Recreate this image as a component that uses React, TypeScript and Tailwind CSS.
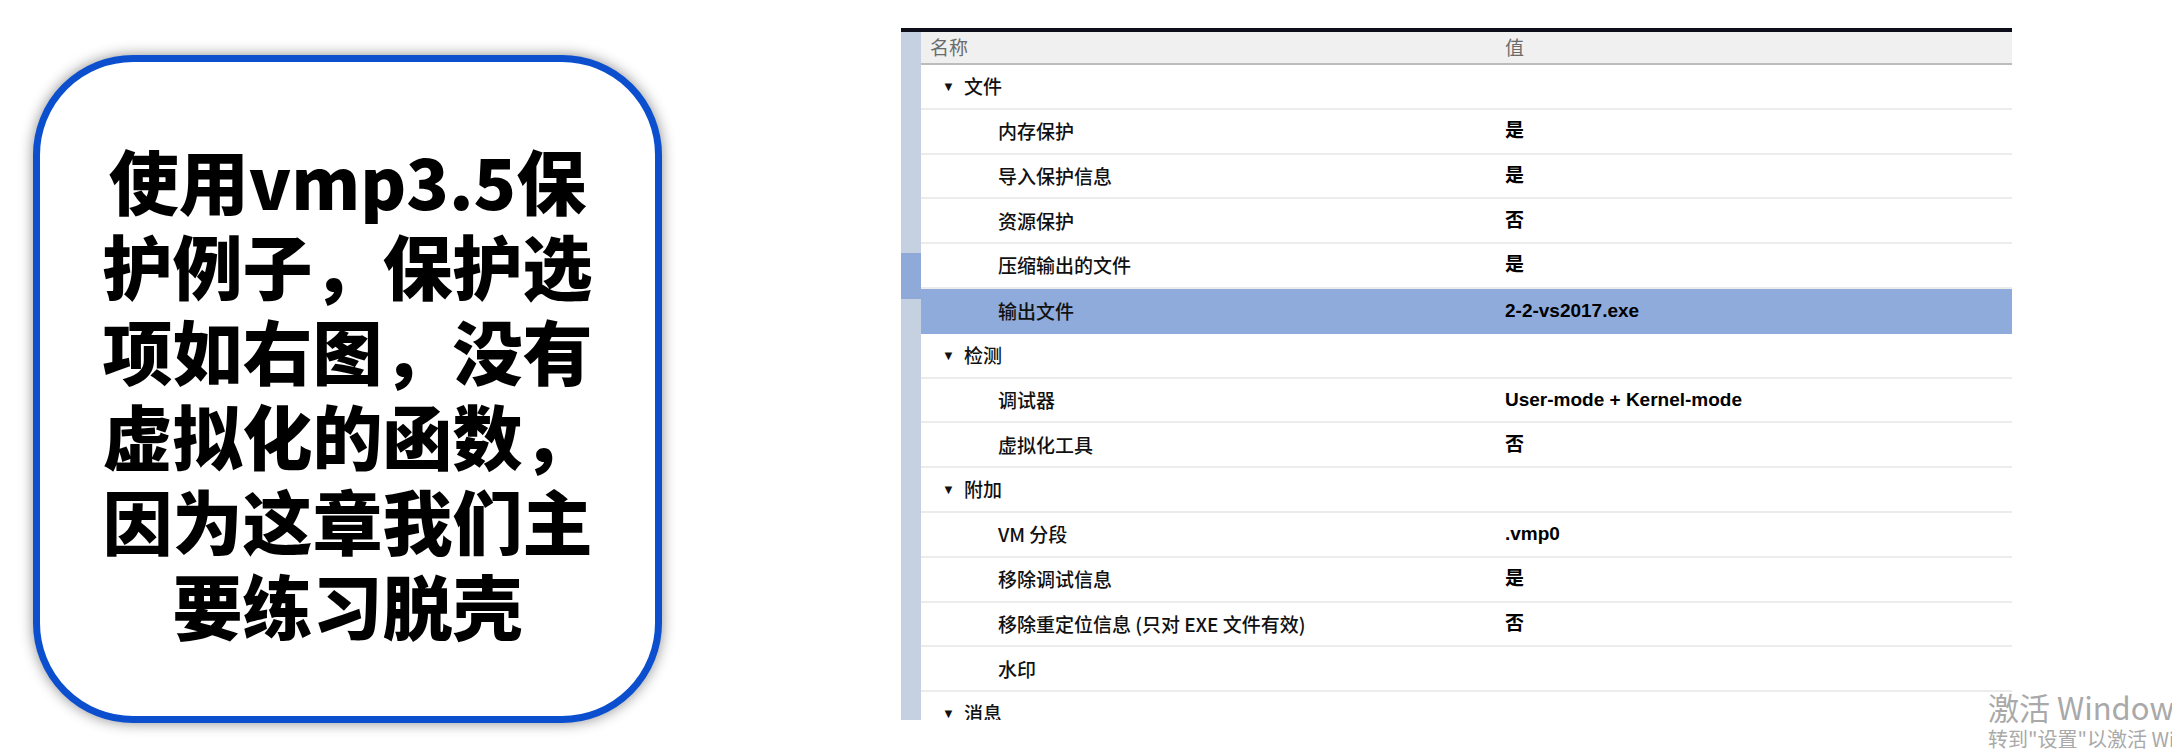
type Row = { name: string; value?: string; selected?: boolean };
type Group = { title: string; rows: Row[] };

const GROUPS: Group[] = [
  {
    title: "文件",
    rows: [
      { name: "内存保护", value: "是" },
      { name: "导入保护信息", value: "是" },
      { name: "资源保护", value: "否" },
      { name: "压缩输出的文件", value: "是" },
      { name: "输出文件", value: "2-2-vs2017.exe", selected: true },
    ],
  },
  {
    title: "检测",
    rows: [
      { name: "调试器", value: "User-mode + Kernel-mode" },
      { name: "虚拟化工具", value: "否" },
    ],
  },
  {
    title: "附加",
    rows: [
      { name: "VM 分段", value: ".vmp0" },
      { name: "移除调试信息", value: "是" },
      { name: "移除重定位信息 (只对 EXE 文件有效)", value: "否" },
      { name: "水印" },
    ],
  },
  { title: "消息", rows: [] },
];

const CJK = "font-['Noto_Sans_CJK_SC',sans-serif]";
const VALUE_FONT = "font-['Liberation_Sans','Noto_Sans_CJK_SC',sans-serif]";

function GroupRow({ title }: { title: string }) {
  return (
    <div className="flex h-[44.8px] shrink-0 items-center border-b-2 border-[#ececec] pl-[21px]">
      <span className="mr-[9px] text-[13px] leading-none text-[#111]">▼</span>
      <span className={`${CJK} text-[19px] font-medium text-[#111]`}>{title}</span>
    </div>
  );
}

function PropRow({ row }: { row: Row }) {
  return (
    <div
      className={`flex h-[44.8px] shrink-0 items-center ${
        row.selected ? "bg-[#8fabdb]" : "border-b-2 border-[#ececec]"
      }`}
    >
      <div className={`${CJK} w-[584px] shrink-0 pl-[77px] text-[19px] font-medium text-[#111]`}>
        {row.name}
      </div>
      <div className={`${VALUE_FONT} text-[19px] font-bold text-black`}>{row.value}</div>
    </div>
  );
}

export default function App() {
  return (
    <div className="relative flex h-[755px] w-[2172px] items-start overflow-hidden bg-white">
      {/* note card */}
      <div className="ml-[33px] mt-[55px] flex h-[668px] w-[629px] shrink-0 items-center justify-center rounded-[100px] border-[7px] border-[#0b4fcf] bg-white pt-[6px] shadow-[0_0_14px_rgba(0,0,0,0.45)]">
        <p className={`${CJK} text-center text-[70px] font-black leading-[85px] text-black`}>
          使用vmp3.5保
          <br />
          护例子，保护选
          <br />
          项如右图，没有
          <br />
          虚拟化的函数，
          <br />
          因为这章我们主
          <br />
          要练习脱壳
        </p>
      </div>

      {/* property grid */}
      <div className="ml-[239px] mt-[28px] flex h-[692px] w-[1111px] shrink-0 overflow-hidden border-t-4 border-[#0e0e1a] bg-white">
        <div className="flex w-[20px] shrink-0 flex-col">
          <div className="h-[221px] bg-[#c5d1e0]" />
          <div className="h-[46px] bg-[#8fa9d8]" />
          <div className="flex-1 bg-[#c5d1e0]" />
        </div>
        <div className="flex flex-1 flex-col">
          <div className="flex h-[33px] shrink-0 items-center border-b-2 border-[#bcbcbc] bg-[#f0f0f0]">
            <div className={`${CJK} w-[584px] shrink-0 pl-[9px] text-[19px] text-[#6b6b6b]`}>名称</div>
            <div className={`${CJK} text-[19px] text-[#6b6b6b]`}>值</div>
          </div>
          {GROUPS.map((g) => (
            <div key={g.title} className="flex flex-col">
              <GroupRow title={g.title} />
              {g.rows.map((r) => (
                <PropRow key={r.name} row={r} />
              ))}
            </div>
          ))}
        </div>
      </div>

      {/* activation watermark */}
      <div className={`${CJK} pointer-events-none absolute left-[1988px] top-[688px] whitespace-nowrap text-[#a9a9a9]`}>
        <div className="text-[31px] leading-[38px]">激活 Windows</div>
        <div className="text-[20px] leading-[26px]">转到"设置"以激活 Windows。</div>
      </div>
    </div>
  );
}
